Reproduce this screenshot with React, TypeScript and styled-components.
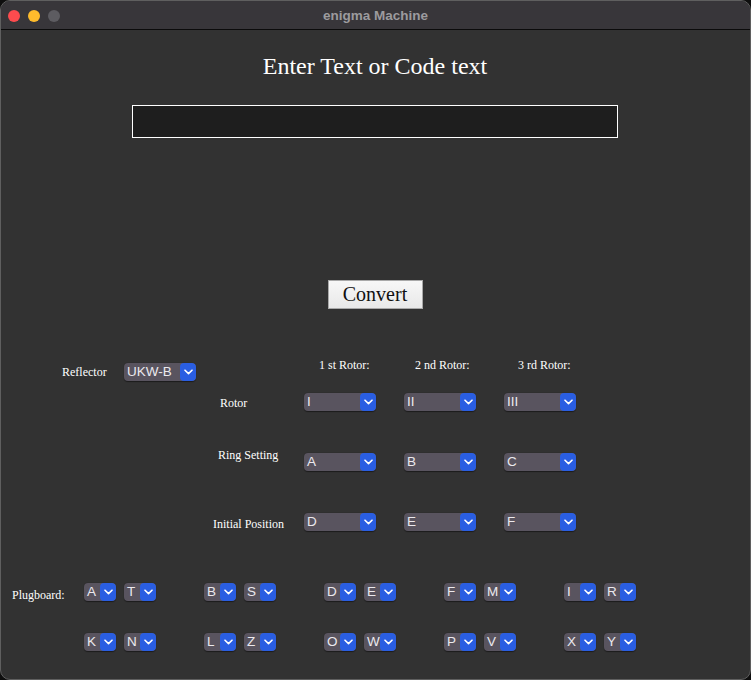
import styled, { createGlobalStyle } from 'styled-components';

const GlobalStyle = createGlobalStyle`
  html, body {
    margin: 0;
    padding: 0;
    background: #0e0e0e;
  }
  * {
    box-sizing: border-box;
  }
`;

const rotors = [
  { header: '1 st Rotor:', headerLeft: 15, rotor: 'I', ring: 'A', start: 'D' },
  { header: '2 nd Rotor:', headerLeft: 11, rotor: 'II', ring: 'B', start: 'E' },
  { header: '3 rd Rotor:', headerLeft: 14, rotor: 'III', ring: 'C', start: 'F' },
];

const plugRows = [
  ['A', 'T', 'B', 'S', 'D', 'E', 'F', 'M', 'I', 'R'],
  ['K', 'N', 'L', 'Z', 'O', 'W', 'P', 'V', 'X', 'Y'],
];

function Chevron() {
  return (
    <svg width="9" height="6" viewBox="0 0 9 6" fill="none">
      <path d="M1 1.2 L4.5 4.6 L8 1.2" stroke="#fff" strokeWidth="1.6" strokeLinecap="round" strokeLinejoin="round" />
    </svg>
  );
}

function Picker({ value, width }: { value: string; width: number }) {
  return (
    <PickerBox $width={width}>
      <PickerValue>{value}</PickerValue>
      <PickerArrow>
        <Chevron />
      </PickerArrow>
    </PickerBox>
  );
}

function App() {
  return (
    <>
      <GlobalStyle />
      <Window>
        <TitleBar>
          <Lights>
            <Light $color="#fd4b4e" />
            <Light $color="#febb2c" />
            <Light $color="#5d5c61" />
          </Lights>
          <WindowTitle>enigma Machine</WindowTitle>
        </TitleBar>

        <Content>
          <Heading>Enter Text or Code text</Heading>
          <TextInput type="text" />
          <ConvertButton>Convert</ConvertButton>

          <RotorGrid>
            <Label $col={1} $row={1}>Reflector</Label>
            <Cell $col={2} $row={1}>
              <Picker value="UKW-B" width={72} />
            </Cell>

            {rotors.map((r, i) => (
              <Label key={r.header} $col={4 + i} $row={1} $left={r.headerLeft} $shift={-7}>
                {r.header}
              </Label>
            ))}

            <Label $col={3} $row={2} $left={24} $shift={1}>Rotor</Label>
            <Label $col={3} $row={3} $left={22} $shift={-7}>Ring Setting</Label>
            <Label $col={3} $row={4} $left={17} $shift={2}>Initial Position</Label>

            {rotors.map((r, i) => (
              <Cell key={'rotor' + i} $col={4 + i} $row={2}>
                <Picker value={r.rotor} width={72} />
              </Cell>
            ))}
            {rotors.map((r, i) => (
              <Cell key={'ring' + i} $col={4 + i} $row={3}>
                <Picker value={r.ring} width={72} />
              </Cell>
            ))}
            {rotors.map((r, i) => (
              <Cell key={'start' + i} $col={4 + i} $row={4}>
                <Picker value={r.start} width={72} />
              </Cell>
            ))}
          </RotorGrid>

          <Plugboard>
            <Label $col={1} $row={1} $shift={3}>Plugboard:</Label>
            {plugRows.map((row, ri) =>
              [0, 1, 2, 3, 4].map((p) => (
                <PlugPair key={ri + '-' + p} $col={2 + p} $row={1 + ri}>
                  <Picker value={row[p * 2]} width={32} />
                  <Picker value={row[p * 2 + 1]} width={32} />
                </PlugPair>
              ))
            )}
          </Plugboard>
        </Content>
      </Window>
    </>
  );
}

const Window = styled.div`
  width: 751px;
  height: 680px;
  background: #323232;
  border: 1px solid #5f5f5f;
  border-radius: 10px;
  overflow: hidden;
  display: flex;
  flex-direction: column;
`;

const TitleBar = styled.div`
  height: 29px;
  flex-shrink: 0;
  background: #38363a;
  border-bottom: 1px solid #0b0b0b;
  display: flex;
  align-items: center;
  position: relative;
`;

const Lights = styled.div`
  display: flex;
  gap: 8px;
  padding-left: 7px;
  padding-top: 1px;
`;

const Light = styled.span<{ $color: string }>`
  width: 12px;
  height: 12px;
  border-radius: 50%;
  background: ${(p) => p.$color};
`;

const WindowTitle = styled.div`
  position: absolute;
  left: 0;
  right: 0;
  top: 0;
  bottom: 0;
  display: flex;
  align-items: center;
  justify-content: center;
  font-family: 'Liberation Sans', Arial, sans-serif;
  font-weight: 700;
  font-size: 13.5px;
  color: #9c9b9e;
  pointer-events: none;
`;

const Content = styled.div`
  display: flex;
  flex-direction: column;
  align-items: center;
  padding-right: 1px;
`;

const Heading = styled.h1`
  margin: 22px 0 0;
  font-family: 'Liberation Serif', 'Times New Roman', serif;
  font-weight: 400;
  font-size: 24px;
  line-height: 28px;
  color: #ffffff;
`;

const TextInput = styled.input`
  margin-top: 25px;
  width: 486px;
  height: 33px;
  background: #1e1e1e;
  border: 1px solid #ffffff;
  outline: none;
  color: #fff;
  font-family: 'Liberation Sans', Arial, sans-serif;
  font-size: 13px;
`;

const ConvertButton = styled.button`
  margin-top: 142px;
  width: 95px;
  height: 29px;
  padding: 0;
  background: linear-gradient(#f7f7f7, #e9e9e9);
  border: 1px solid #a9a9a9;
  border-radius: 0;
  font-family: 'Liberation Serif', 'Times New Roman', serif;
  font-size: 20px;
  color: #111;
`;

const RotorGrid = styled.div`
  align-self: stretch;
  margin-top: 48px;
  padding-left: 61px;
  display: grid;
  grid-template-columns: 62px 72px 108px 100px 100px 72px;
  grid-template-rows: 30px 30px 90px 30px;
`;

const Label = styled.div<{ $col: number; $row: number; $left?: number; $shift?: number }>`
  grid-column: ${(p) => p.$col};
  grid-row: ${(p) => p.$row};
  align-self: center;
  justify-self: start;
  margin-left: ${(p) => p.$left ?? 0}px;
  transform: translateY(${(p) => p.$shift ?? 0}px);
  font-family: 'Liberation Serif', 'Times New Roman', serif;
  font-size: 12px;
  line-height: 14px;
  color: #ffffff;
  white-space: nowrap;
`;

const Cell = styled.div<{ $col: number; $row: number }>`
  grid-column: ${(p) => p.$col};
  grid-row: ${(p) => p.$row};
  align-self: center;
  display: flex;
`;

const Plugboard = styled.div`
  align-self: stretch;
  margin-top: 46px;
  padding-left: 11px;
  display: grid;
  grid-template-columns: 72px repeat(5, 120px);
  grid-template-rows: 18px 18px;
  row-gap: 32px;
`;

const PlugPair = styled.div<{ $col: number; $row: number }>`
  grid-column: ${(p) => p.$col};
  grid-row: ${(p) => p.$row};
  display: flex;
  gap: 8px;
`;

const PickerBox = styled.div<{ $width: number }>`
  width: ${(p) => p.$width}px;
  height: 18px;
  display: flex;
  align-items: stretch;
  background: #59545f;
  border-radius: 4px;
  box-shadow: 0 0.5px 1px rgba(0, 0, 0, 0.45);
  overflow: hidden;
`;

const PickerValue = styled.span`
  flex: 1;
  padding-left: 3px;
  font-family: 'Liberation Sans', Arial, sans-serif;
  font-size: 13.5px;
  line-height: 18px;
  color: #ebe9ee;
  overflow: hidden;
  white-space: nowrap;
`;

const PickerArrow = styled.span`
  width: 16px;
  flex-shrink: 0;
  display: flex;
  align-items: center;
  justify-content: center;
  background: #2a5ee2;
  border-radius: 4px;
`;

export default App;
